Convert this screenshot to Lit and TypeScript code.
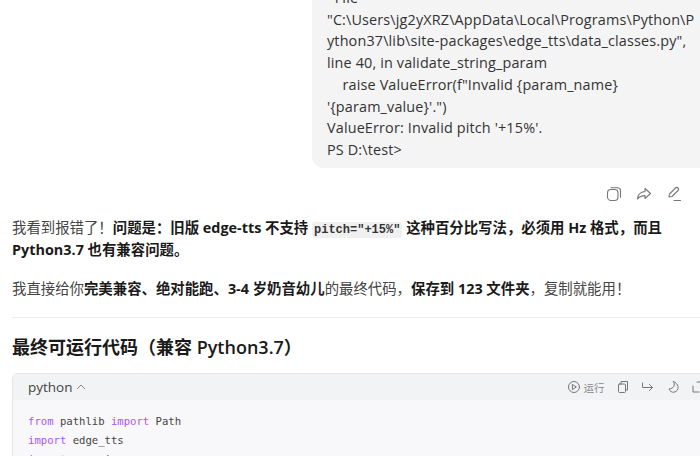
import { css, html, LitElement } from 'lit';
import { customElement } from 'lit/decorators.js';

const USER_TEXT = `  File
"C:\\Users\\jg2yXRZ\\AppData\\Local\\Programs\\Python\\P
ython37\\lib\\site-packages\\edge_tts\\data_classes.py",
line 40, in validate_string_param
    raise ValueError(f"Invalid {param_name}
'{param_value}'.")
ValueError: Invalid pitch '+15%'.
PS D:\\test>`;

@customElement('app-root')
export class AppRoot extends LitElement {
  static styles = css`
    :host {
      display: block;
      height: 456px;
      overflow: hidden;
      background: #fff;
      color: #222;
      font-family: 'Open Sans', 'Noto Sans CJK SC', sans-serif;
      font-size: 14px;
    }

    .chat {
      width: 760px;
      margin-top: -21px;
    }

    .user-row {
      display: flex;
      flex-direction: column;
      align-items: flex-start;
      padding-left: 312px;
    }

    .bubble {
      box-sizing: border-box;
      width: 448px;
      height: 189px;
      padding: 8px 15px 0;
      background: #f4f4f5;
      border-radius: 12px;
      color: #333;
      font-size: 14.4px;
      letter-spacing: 0.15px;
      line-height: 21.7px;
      white-space: pre;
    }

    .actions {
      display: flex;
      gap: 14px;
      width: 388px;
      padding-top: 18px;
      padding-left: 294px;
      box-sizing: border-box;
    }

    .actions svg {
      width: 16px;
      height: 16px;
      fill: none;
      stroke: #777;
      stroke-width: 1.1;
      stroke-linejoin: round;
      stroke-linecap: round;
    }

    .answer {
      padding: 15px 0 0 12px;
      width: 688px;
    }

    p {
      margin: 0 0 18px;
      color: #444;
      font-size: 14.4px;
      line-height: 21.7px;
    }

    strong {
      color: #1a1a1a;
      font-weight: 700;
    }

    code {
      padding: 1px 2px;
      border-radius: 3px;
      background: #f0f0f1;
      color: #333;
      font-family: 'Liberation Mono', monospace;
      font-size: 12px;
      font-weight: 700;
      line-height: 1;
    }

    hr {
      height: 1px;
      margin: -1px 0 0;
      border: 0;
      background: #ececec;
    }

    h2 {
      margin: 17px 0 14px;
      color: #1a1a1a;
      font-size: 18px;
      font-weight: 600;
      line-height: 24px;
    }

    .code-block {
      width: 740px;
      border: 1px solid #e4e5e7;
      border-radius: 6px 6px 0 0;
      background: #f8f8fa;
    }

    .code-head {
      display: flex;
      align-items: center;
      height: 26px;
      padding-left: 15px;
      background: #f2f3f5;
      color: #444;
      font-size: 13.5px;
    }

    .chevron {
      width: 10px;
      height: 10px;
      margin-left: 3px;
      fill: none;
      stroke: #888;
      stroke-width: 1;
    }

    .tools {
      display: flex;
      flex-shrink: 0;
      align-items: center;
      margin-left: 481px;
      color: #888;
      font-size: 10.5px;
    }

    .tools svg {
      flex-shrink: 0;
      width: 14px;
      height: 14px;
      fill: none;
      stroke: #777;
      stroke-width: 1;
      stroke-linejoin: round;
      stroke-linecap: round;
    }

    .tools span {
      margin: 0 11px 0 3px;
      white-space: nowrap;
    }

    .tools svg.tool {
      margin-right: 11px;
    }

    pre {
      margin: 0;
      padding: 12px 15px;
      color: #444;
      font-family: 'DejaVu Sans Mono', monospace;
      font-size: 10.6px;
      line-height: 19px;
    }

    .kw {
      color: #a855f7;
    }
  `;

  render() {
    return html`
      <div class="chat">
        <div class="user-row">
          <div class="bubble">${USER_TEXT}</div>
          <div class="actions">
            <svg viewBox="0 0 16 16">
              <rect x="1.5" y="3.5" width="10.5" height="11" rx="3.5" />
              <path d="M5 1.800h6.500a3 3 0 0 1 3 3v6.500" />
            </svg>
            <svg viewBox="0 0 16 16">
              <path d="M9 2.500l5.500 5-5.500 5V9.600c-3 0-5.500.8-7.500 3.400.3-4 3-7 7.500-7.500z" />
            </svg>
            <svg viewBox="0 0 16 16">
              <path d="M3 11l.5-3 6-6a1.500 1.500 0 0 1 2.500 2.500l-6 6zM8 14.500h6.500" />
            </svg>
          </div>
        </div>
        <div class="answer">
          <p>
            我看到报错了！<strong>问题是：旧版 edge-tts 不支持
              <code>pitch="+15%"</code> 这种百分比写法，必须用 Hz 格式，而且<br />Python3.7 也有兼容问题。</strong>
          </p>
          <p>
            我直接给你<strong>完美兼容、绝对能跑、3-4 岁奶音幼儿</strong>的最终代码，<strong>保存到
              123 文件夹</strong>，复制就能用！
          </p>
          <hr />
          <h2>最终可运行代码（兼容 Python3.7）</h2>
          <div class="code-block">
            <div class="code-head">
              python
              <svg class="chevron" viewBox="0 0 10 10"><path d="M1 7l4-4 4 4" /></svg>
              <div class="tools">
                <svg viewBox="0 0 14 14">
                  <circle cx="7" cy="7" r="5.500" />
                  <path d="M5.700 4.600l3.600 2.400-3.600 2.400z" />
                </svg>
                <span>运行</span>
                <svg class="tool" viewBox="0 0 14 14">
                  <rect x="2.500" y="4" width="7" height="8.500" rx="1" />
                  <path d="M5 4V1.500h6.500V10H9.500" />
                </svg>
                <svg class="tool" viewBox="0 0 14 14">
                  <path d="M1.500 3v4.500h10M8.500 4.500l3 3-3 3" />
                </svg>
                <svg class="tool" viewBox="0 0 14 14">
                  <path d="M7.500 1.500c2 3.500.5 7-4.500 7.500 1 2.500 3 3.500 5 3.200 3-.5 4.500-3 4-5.700-.4-2-2-4-4.500-5z" />
                </svg>
                <svg viewBox="0 0 14 14"><path d="M2 6v6h6M6 2h6v6" /></svg>
              </div>
            </div>
            <pre><span class="kw">from</span> pathlib <span class="kw">import</span> Path
<span class="kw">import</span> edge_tts
<span class="kw">import</span> asyncio</pre>
          </div>
        </div>
      </div>
    `;
  }
}
